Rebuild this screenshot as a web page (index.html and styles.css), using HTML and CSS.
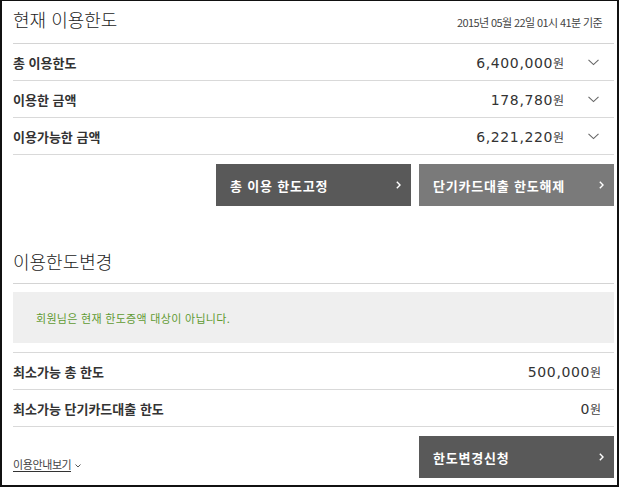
FILE: index.html
```html
<!DOCTYPE html>
<html lang="ko">
<head>
    <meta charset="utf-8" />
    <title>이용한도</title>
    <link rel="stylesheet" href="styles.css">
</head>
<body>
    <div class="page">
        <div class="head">
            <h2 class="title">현재 이용한도</h2>
            <span class="date">2015년 05월 22일 01시 41분 기준</span>
        </div>

        <ul class="rows">
            <li class="row">
                <span class="label">총 이용한도</span>
                <span class="amount">6,400,000<em>원</em></span>
                <span class="toggle"><svg width="11" height="7" viewBox="0 0 11 7"><path d="M0.5 0.8 L5.5 5.6 L10.5 0.8" fill="none" stroke="#666" stroke-width="1.1"/></svg></span>
            </li>
            <li class="row">
                <span class="label">이용한 금액</span>
                <span class="amount">178,780<em>원</em></span>
                <span class="toggle"><svg width="11" height="7" viewBox="0 0 11 7"><path d="M0.5 0.8 L5.5 5.6 L10.5 0.8" fill="none" stroke="#666" stroke-width="1.1"/></svg></span>
            </li>
            <li class="row">
                <span class="label">이용가능한 금액</span>
                <span class="amount">6,221,220<em>원</em></span>
                <span class="toggle"><svg width="11" height="7" viewBox="0 0 11 7"><path d="M0.5 0.8 L5.5 5.6 L10.5 0.8" fill="none" stroke="#666" stroke-width="1.1"/></svg></span>
            </li>
        </ul>

        <div class="btns">
            <a href="#" class="btn dark">총 이용 한도고정<svg width="5" height="8" viewBox="0 0 5 8"><path d="M0.8 0.8 L4 4 L0.8 7.2" fill="none" stroke="#fff" stroke-width="1.4"/></svg></a>
            <a href="#" class="btn gray">단기카드대출 한도해제<svg width="5" height="8" viewBox="0 0 5 8"><path d="M0.8 0.8 L4 4 L0.8 7.2" fill="none" stroke="#fff" stroke-width="1.4"/></svg></a>
        </div>

        <h2 class="title sub">이용한도변경</h2>

        <div class="notice">회원님은 현재 한도증액 대상이 아닙니다.</div>

        <ul class="rows top-line">
            <li class="row">
                <span class="label">최소가능 총 한도</span>
                <span class="amount end">500,000<em>원</em></span>
            </li>
            <li class="row">
                <span class="label">최소가능 단기카드대출 한도</span>
                <span class="amount end">0<em>원</em></span>
            </li>
        </ul>

        <div class="foot">
            <a href="#" class="guide"><span>이용안내보기</span><svg width="6" height="4" viewBox="0 0 6 4"><path d="M0.5 0.5 L3 3 L5.5 0.5" fill="none" stroke="#555" stroke-width="1"/></svg></a>
            <a href="#" class="btn dark">한도변경신청<svg width="5" height="8" viewBox="0 0 5 8"><path d="M0.8 0.8 L4 4 L0.8 7.2" fill="none" stroke="#fff" stroke-width="1.4"/></svg></a>
        </div>
    </div>
</body>
</html>
```

FILE: styles.css
```css
* {
    margin: 0;
    padding: 0;
}

html, body {
    background: #fff;
}

body {
    font-family: 'Noto Sans CJK KR', 'DejaVu Sans', sans-serif;
    color: #222;
}

a {
    text-decoration: none;
    color: inherit;
}

ul {
    list-style: none;
}

.page {
    width: 619px;
    height: 487px;
    box-sizing: border-box;
    border: 2px solid #111;
    border-top-width: 1px;
    padding: 0 3px 0 11px;
}

.head {
    height: 43px;
    box-sizing: border-box;
    border-bottom: 1px solid #d4d4d4;
    display: flex;
    align-items: baseline;
    justify-content: space-between;
    padding: 5px 12px 0 0;
}

.title {
    font-size: 18px;
    font-weight: 300;
    color: #222;
    line-height: 26px;
}

.date {
    font-size: 11px;
    letter-spacing: -0.6px;
    color: #444;
}

.row {
    height: 37px;
    box-sizing: border-box;
    border-bottom: 1px solid #d9d9d9;
    display: flex;
    align-items: center;
}

.rows.top-line {
    margin-top: 9px;
    border-top: 1px solid #d9d9d9;
}

.label {
    flex: 1;
    font-size: 13px;
    font-weight: 700;
    color: #333;
}

.amount {
    font-family: 'DejaVu Sans', sans-serif;
    font-size: 14px;
    letter-spacing: 0.6px;
    color: #333;
}

    .amount em {
        font-style: normal;
        font-family: 'Noto Sans CJK KR', sans-serif;
        font-size: 12px;
        letter-spacing: 0;
        margin-left: 0;
        color: #444;
    }

    .amount.end {
        margin-right: 13px;
    }

.toggle {
    display: flex;
    margin: 0 15px 0 24px;
}

.btns {
    display: flex;
    justify-content: flex-end;
    gap: 8px;
    margin-top: 9px;
}

.btn {
    width: 195px;
    height: 42px;
    box-sizing: border-box;
    padding: 0 10px 0 14px;
    display: flex;
    align-items: center;
    justify-content: space-between;
    font-size: 13px;
    font-weight: 700;
    letter-spacing: 0.8px;
    color: #fff;
}

    .btn.dark {
        background: #595959;
    }

    .btn.gray {
        background: #7a7a7a;
    }

.title.sub {
    margin-top: 33px;
    height: 44px;
    line-height: 44px;
    border-bottom: 1px solid #d4d4d4;
}

.notice {
    margin-top: 8px;
    height: 51px;
    background: #efefef;
    display: flex;
    align-items: center;
    padding-left: 23px;
    font-size: 11px;
    letter-spacing: 0.3px;
    color: #5f9a32;
}

.foot {
    margin-top: 9px;
    display: flex;
    justify-content: space-between;
    align-items: flex-end;
}

.guide {
    display: flex;
    align-items: center;
    gap: 4px;
    font-size: 11px;
    letter-spacing: -0.4px;
    color: #444;
    margin-bottom: 6px;
}

    .guide span {
        line-height: 13px;
        border-bottom: 1px solid #333;
    }

    .guide svg {
        margin-top: 1px;
    }
```
